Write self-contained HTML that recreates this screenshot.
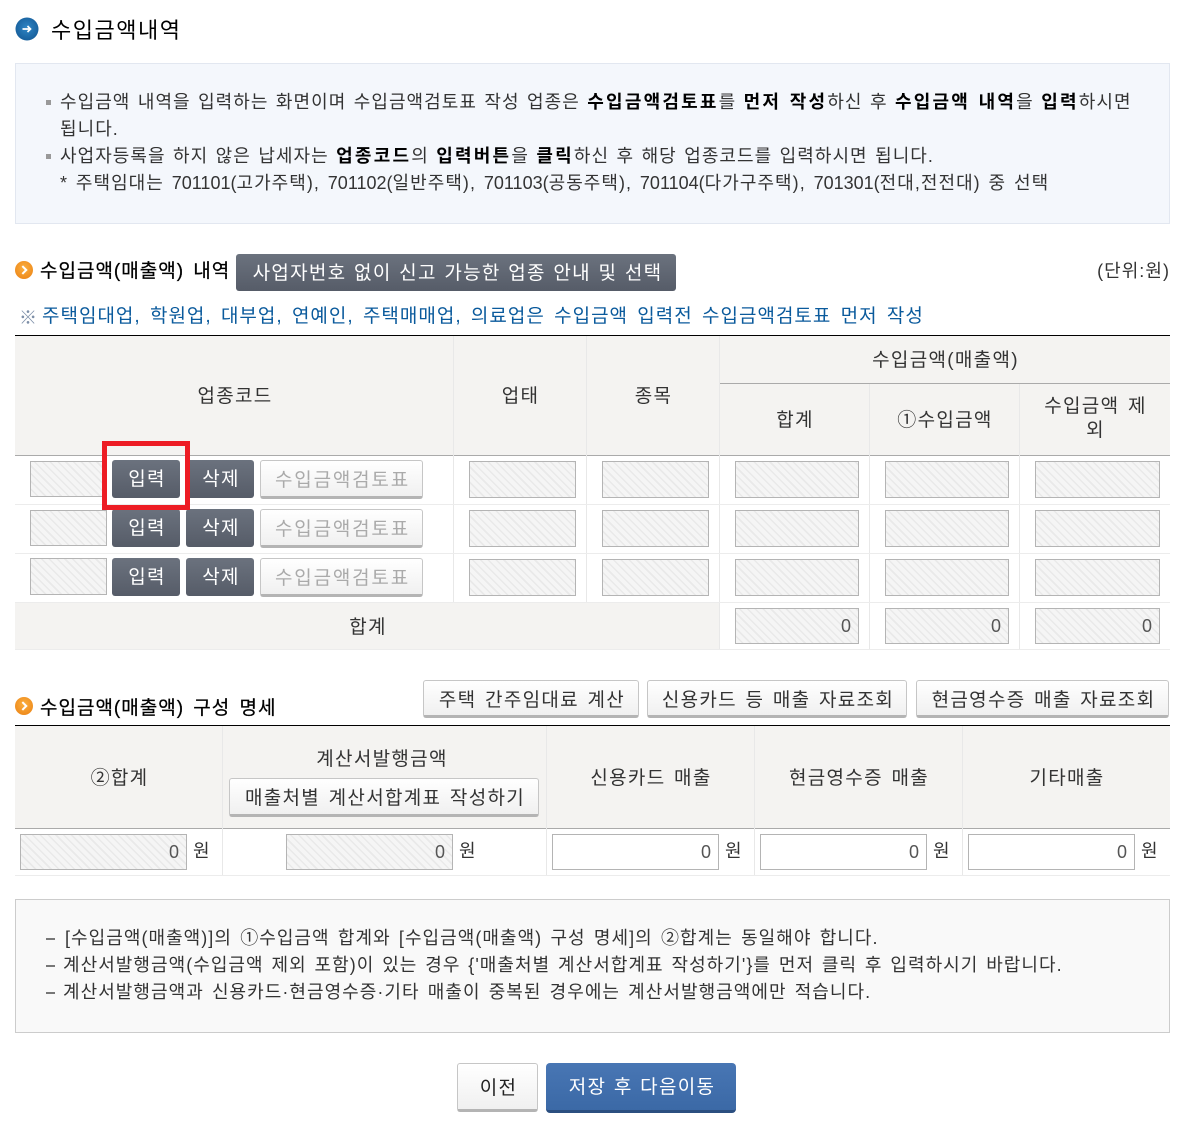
<!DOCTYPE html>
<html lang="ko"><head><meta charset="utf-8"><title>수입금액내역</title>
<style>
html,body{margin:0;padding:0;background:#fff}
#p{position:relative;width:1193px;height:1129px;overflow:hidden;font-family:"Liberation Sans","WenQuanYi Zen Hei","Noto Sans CJK KR",sans-serif;font-size:18px;color:#333}
#p div{position:absolute;box-sizing:border-box}
.t{white-space:nowrap;line-height:27px;height:27px;word-spacing:1.4px;letter-spacing:1.04px}
.c{display:flex;align-items:center;justify-content:center;text-align:center;word-spacing:2px;letter-spacing:1.3px;font-size:19px;padding-left:2px;padding-bottom:2px}
.h{background:repeating-linear-gradient(45deg,#f5f5f5 0 4px,#e9e9e9 4px 5.5px);border:1px solid #b4b4b4;text-align:right;padding-right:7px;line-height:34px;color:#555}
.w{background:#fff;border:1px solid #b4b4b4;text-align:right;padding-right:7px;line-height:34px;color:#555}
.d{background:linear-gradient(#6b727e,#565c68);border-radius:3px;color:#fff;padding-bottom:4px}
.l{background:linear-gradient(#fff,#f0f0f0);border:1px solid #c6c6c6;border-bottom:3px solid #b4b4b4;border-radius:3px;color:#333;padding-bottom:0}
.g{color:#aaa;letter-spacing:1.8px}
.bg{background:#f4f3f1}
.hl{height:1px;background:#ececec}
.vl{width:1px;background:#e8e8e8}
.k{color:#000;font-size:19px;letter-spacing:1px;word-spacing:3px;-webkit-text-stroke:.25px #000}
.n{letter-spacing:0}
.m{left:46px;width:9px;height:2px;background:#777}
b{color:#000;letter-spacing:2.2px}
</style></head><body><div id="p">

<svg style="position:absolute;left:15px;top:17px" width="24" height="24" viewBox="0 0 24 24"><defs><radialGradient id="a" cx="50%" cy="45%" r="55%"><stop offset="0" stop-color="#2f86c6"/><stop offset="1" stop-color="#175f9c"/></radialGradient><radialGradient id="o" cx="50%" cy="40%" r="60%"><stop offset="0" stop-color="#fbb040"/><stop offset="1" stop-color="#ee8a1c"/></radialGradient></defs><circle cx="12" cy="12" r="11.500" fill="url(#a)"/><path d="M7.500 12h8M12.500 9l3 3-3 3" fill="none" stroke="#fff" stroke-width="1.700"/></svg>
<div class="t" style="left:51px;top:17px;font-size:22px;letter-spacing:1.5px;color:#000">수입금액내역</div>

<div style="left:15px;top:63px;width:1155px;height:161px;background:#f4f7fc;border:1px solid #e2e7f0"></div>
<div style="left:46px;top:100px;width:5px;height:5px;background:#999"></div>
<div style="left:46px;top:154px;width:5px;height:5px;background:#999"></div>
<div class="t" style="left:60px;top:89px">수입금액 내역을 입력하는 화면이며 수입금액검토표 작성 업종은 <b>수입금액검토표</b>를 <b>먼저 작성</b>하신 후 <b>수입금액 내역</b>을 <b>입력</b>하시면</div>
<div class="t" style="left:60px;top:116px">됩니다.</div>
<div class="t" style="left:60px;top:143px">사업자등록을 하지 않은 납세자는 <b>업종코드</b>의 <b>입력버튼</b>을 <b>클릭</b>하신 후 해당 업종코드를 입력하시면 됩니다.</div>
<div class="t" style="left:60px;top:170px;word-spacing:1.8px">* 주택임대는 <span class="n">701101(</span>고가주택), <span class="n">701102(</span>일반주택), <span class="n">701103(</span>공동주택), <span class="n">701104(</span>다가구주택), <span class="n">701301(</span>전대,전전대) 중 선택</div>

<svg style="position:absolute;left:15px;top:261px" width="18" height="18" viewBox="0 0 16 16"><circle cx="8" cy="8" r="8" fill="url(#o)"/><path d="M6.500 4.500L10 8l-3.500 3.500" fill="none" stroke="#fff" stroke-width="1.800"/></svg>
<div class="t k" style="left:40px;top:258px">수입금액(매출액) 내역</div>
<div class="d c" style="left:236px;top:254px;width:440px;height:37px;word-spacing:1px;padding-left:3px;padding-bottom:2px">사업자번호 없이 신고 가능한 업종 안내 및 선택</div>
<div class="t" style="right:23px;top:258px">(단위:원)</div>
<div class="t" style="left:19px;top:305px;color:#7d8fa8;letter-spacing:0">※</div>
<div class="t" style="left:42px;top:303px;color:#0a5a9c;font-size:19px;letter-spacing:1px;word-spacing:3px">주택임대업, 학원업, 대부업, 연예인, 주택매매업, 의료업은 수입금액 입력전 수입금액검토표 먼저 작성</div>

<!-- table 1 -->
<div class="bg" style="left:15px;top:336px;width:1155px;height:119px"></div>
<div style="left:15px;top:335px;width:1155px;height:1px;background:#000"></div>
<div style="left:15px;top:455px;width:1155px;height:1px;background:#aaa"></div>
<div style="left:719px;top:383px;width:451px;height:1px;background:#aaa"></div>
<div class="vl" style="left:453px;top:336px;height:267px"></div>
<div class="vl" style="left:586px;top:336px;height:267px"></div>
<div class="vl" style="left:719px;top:336px;height:314px"></div>
<div class="vl" style="left:869px;top:384px;height:266px"></div>
<div class="vl" style="left:1019px;top:384px;height:266px"></div>
<div class="hl" style="left:15px;top:504px;width:1155px"></div>
<div class="hl" style="left:15px;top:553px;width:1155px"></div>
<div class="bg" style="left:15px;top:603px;width:704px;height:46px"></div>
<div class="hl" style="left:15px;top:602px;width:1155px"></div>
<div class="hl" style="left:15px;top:649px;width:1155px"></div>

<div class="c" style="left:15px;top:336px;width:438px;height:119px">업종코드</div>
<div class="c" style="left:453px;top:336px;width:133px;height:119px">업태</div>
<div class="c" style="left:586px;top:336px;width:133px;height:119px">종목</div>
<div class="c" style="left:719px;top:336px;width:451px;height:47px">수입금액(매출액)</div>
<div class="c" style="left:719px;top:384px;width:150px;height:71px">합계</div>
<div class="c" style="left:869px;top:384px;width:150px;height:71px">①수입금액</div>
<div class="c" style="left:1019px;top:384px;width:151px;height:71px;line-height:24px">수입금액 제<br>외</div>

<!-- row 1 -->
<div class="h" style="left:30px;top:461px;width:77px;height:36px"></div>
<div class="d c" style="left:112px;top:460px;width:68px;height:38px">입력</div>
<div class="d c" style="left:186px;top:460px;width:68px;height:38px">삭제</div>
<div class="l c g" style="left:260px;top:460px;width:163px;height:39px">수입금액검토표</div>
<div class="h" style="left:469px;top:461px;width:107px;height:37px"></div>
<div class="h" style="left:602px;top:461px;width:107px;height:37px"></div>
<div class="h" style="left:735px;top:461px;width:124px;height:37px"></div>
<div class="h" style="left:885px;top:461px;width:124px;height:37px"></div>
<div class="h" style="left:1035px;top:461px;width:125px;height:37px"></div>
<!-- row 2 -->
<div class="h" style="left:30px;top:510px;width:77px;height:36px"></div>
<div class="d c" style="left:112px;top:509px;width:68px;height:38px">입력</div>
<div class="d c" style="left:186px;top:509px;width:68px;height:38px">삭제</div>
<div class="l c g" style="left:260px;top:509px;width:163px;height:39px">수입금액검토표</div>
<div class="h" style="left:469px;top:510px;width:107px;height:37px"></div>
<div class="h" style="left:602px;top:510px;width:107px;height:37px"></div>
<div class="h" style="left:735px;top:510px;width:124px;height:37px"></div>
<div class="h" style="left:885px;top:510px;width:124px;height:37px"></div>
<div class="h" style="left:1035px;top:510px;width:125px;height:37px"></div>
<!-- row 3 -->
<div class="h" style="left:30px;top:558px;width:77px;height:37px"></div>
<div class="d c" style="left:112px;top:558px;width:68px;height:38px">입력</div>
<div class="d c" style="left:186px;top:558px;width:68px;height:38px">삭제</div>
<div class="l c g" style="left:260px;top:558px;width:163px;height:39px">수입금액검토표</div>
<div class="h" style="left:469px;top:559px;width:107px;height:37px"></div>
<div class="h" style="left:602px;top:559px;width:107px;height:37px"></div>
<div class="h" style="left:735px;top:559px;width:124px;height:37px"></div>
<div class="h" style="left:885px;top:559px;width:124px;height:37px"></div>
<div class="h" style="left:1035px;top:559px;width:125px;height:37px"></div>
<!-- total -->
<div class="c" style="left:15px;top:603px;width:704px;height:46px">합계</div>
<div class="h" style="left:735px;top:608px;width:124px;height:36px">0</div>
<div class="h" style="left:885px;top:608px;width:124px;height:36px">0</div>
<div class="h" style="left:1035px;top:608px;width:125px;height:36px">0</div>

<div style="left:102px;top:441px;width:88px;height:69px;border:5px solid #ed1c24"></div>

<!-- section 2 -->
<svg style="position:absolute;left:15px;top:697px" width="18" height="18" viewBox="0 0 16 16"><circle cx="8" cy="8" r="8" fill="url(#o)"/><path d="M6.500 4.500L10 8l-3.500 3.500" fill="none" stroke="#fff" stroke-width="1.800"/></svg>
<div class="t k" style="left:40px;top:695px">수입금액(매출액) 구성 명세</div>
<div class="l c" style="left:423px;top:680px;width:216px;height:38px">주택 간주임대료 계산</div>
<div class="l c" style="left:647px;top:680px;width:260px;height:38px">신용카드 등 매출 자료조회</div>
<div class="l c" style="left:916px;top:680px;width:253px;height:38px">현금영수증 매출 자료조회</div>

<div class="bg" style="left:15px;top:726px;width:1155px;height:102px"></div>
<div style="left:15px;top:725px;width:1155px;height:1px;background:#000"></div>
<div style="left:15px;top:828px;width:1155px;height:1px;background:#aaa"></div>
<div class="vl" style="left:222px;top:726px;height:149px"></div>
<div class="vl" style="left:546px;top:726px;height:149px"></div>
<div class="vl" style="left:754px;top:726px;height:149px"></div>
<div class="vl" style="left:962px;top:726px;height:149px"></div>
<div class="hl" style="left:15px;top:875px;width:1155px"></div>

<div class="c" style="left:15px;top:726px;width:207px;height:102px">②합계</div>
<div class="c" style="left:219px;top:745px;width:324px;height:27px">계산서발행금액</div>
<div class="l c" style="left:229px;top:778px;width:310px;height:39px">매출처별 계산서합계표 작성하기</div>
<div class="c" style="left:546px;top:726px;width:208px;height:102px">신용카드 매출</div>
<div class="c" style="left:754px;top:726px;width:208px;height:102px">현금영수증 매출</div>
<div class="c" style="left:962px;top:726px;width:208px;height:102px">기타매출</div>

<div class="h" style="left:20px;top:834px;width:167px;height:36px">0</div><div class="t" style="left:193px;top:838px">원</div>
<div class="h" style="left:286px;top:834px;width:167px;height:36px">0</div><div class="t" style="left:459px;top:838px">원</div>
<div class="w" style="left:552px;top:834px;width:167px;height:36px">0</div><div class="t" style="left:725px;top:838px">원</div>
<div class="w" style="left:760px;top:834px;width:167px;height:36px">0</div><div class="t" style="left:933px;top:838px">원</div>
<div class="w" style="left:968px;top:834px;width:167px;height:36px">0</div><div class="t" style="left:1141px;top:838px">원</div>

<div style="left:15px;top:899px;width:1155px;height:134px;background:#f9f9f9;border:1px solid #ccc"></div>
<div class="m" style="top:938px"></div>
<div class="m" style="top:965px"></div>
<div class="m" style="top:992px"></div>
<div class="t" style="left:65px;top:925px;word-spacing:2.2px">[수입금액(매출액)]의 ①수입금액 합계와 [수입금액(매출액) 구성 명세]의 ②합계는 동일해야 합니다.</div>
<div class="t" style="left:63px;top:952px;word-spacing:1.8px">계산서발행금액(수입금액 제외 포함)이 있는 경우 {'매출처별 계산서합계표 작성하기'}를 먼저 클릭 후 입력하시기 바랍니다.</div>
<div class="t" style="left:63px;top:979px;word-spacing:2.1px">계산서발행금액과 신용카드·현금영수증·기타 매출이 중복된 경우에는 계산서발행금액에만 적습니다.</div>

<div class="l c" style="left:457px;top:1063px;width:81px;height:49px;color:#222">이전</div>
<div class="c" style="left:546px;top:1063px;width:190px;height:50px;background:linear-gradient(#4876b4,#3b69a6);border-bottom:3px solid #2b4f80;border-radius:4px;color:#fff;word-spacing:1px">저장 후 다음이동</div>
</div></body></html>
